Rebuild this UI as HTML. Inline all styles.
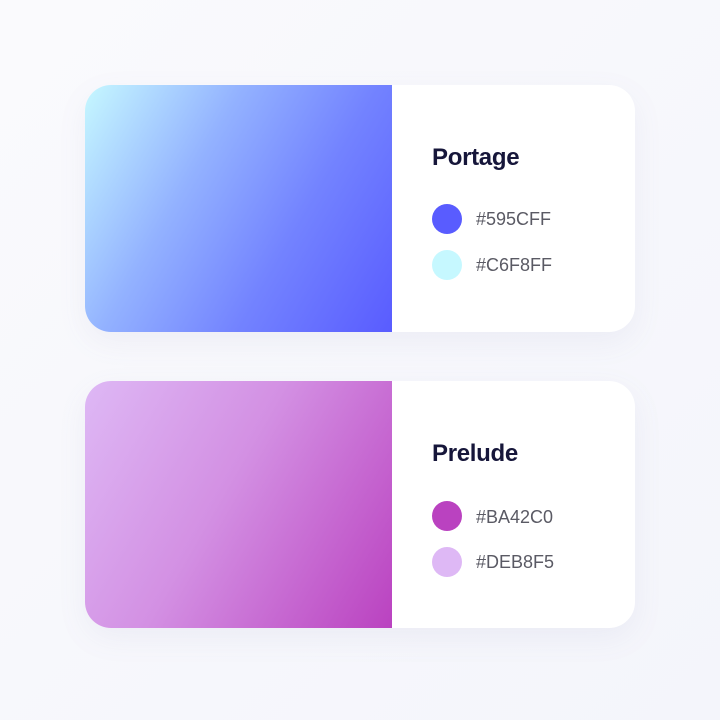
<!DOCTYPE html>
<html><head><style>
body{margin:0;width:720px;height:720px;background:linear-gradient(135deg,#fafafd,#f4f5fb);font-family:"Liberation Sans",sans-serif;position:relative;overflow:hidden}
.card{position:absolute;left:85px;width:550px;height:247px;background:#fff;border-radius:26px;box-shadow:0 10px 30px rgba(120,120,170,0.08);overflow:hidden}
.grad{position:absolute;left:0;top:0;width:307px;height:100%}
.title{position:absolute;left:347px;font-weight:bold;font-size:24px;color:#16163a;letter-spacing:-0.3px}
.dot{position:absolute;left:347px;width:30px;height:30px;border-radius:50%}
.hex{position:absolute;left:391px;font-size:18px;color:#5a5a64}
</style></head><body>
<div class="card" style="top:85px">
<div class="grad" style="background:linear-gradient(120deg,#c6f8ff 0%,#93b2ff 35%,#7383ff 65%,#595cff 100%)"></div>
<div class="title" style="top:59px">Portage</div>
<div class="dot" style="top:119px;background:#595cff"></div><div class="hex" style="top:124px">#595CFF</div>
<div class="dot" style="top:165px;background:#c6f8ff"></div><div class="hex" style="top:170px">#C6F8FF</div>
</div>
<div class="card" style="top:381px">
<div class="grad" style="background:linear-gradient(120deg,#deb8f5 0%,#d390e3 45%,#ba42c0 100%)"></div>
<div class="title" style="top:59px">Prelude</div>
<div class="dot" style="top:120px;background:#ba42c0"></div><div class="hex" style="top:126px">#BA42C0</div>
<div class="dot" style="top:166px;background:#deb8f5"></div><div class="hex" style="top:171px">#DEB8F5</div>
</div>
</body></html>
